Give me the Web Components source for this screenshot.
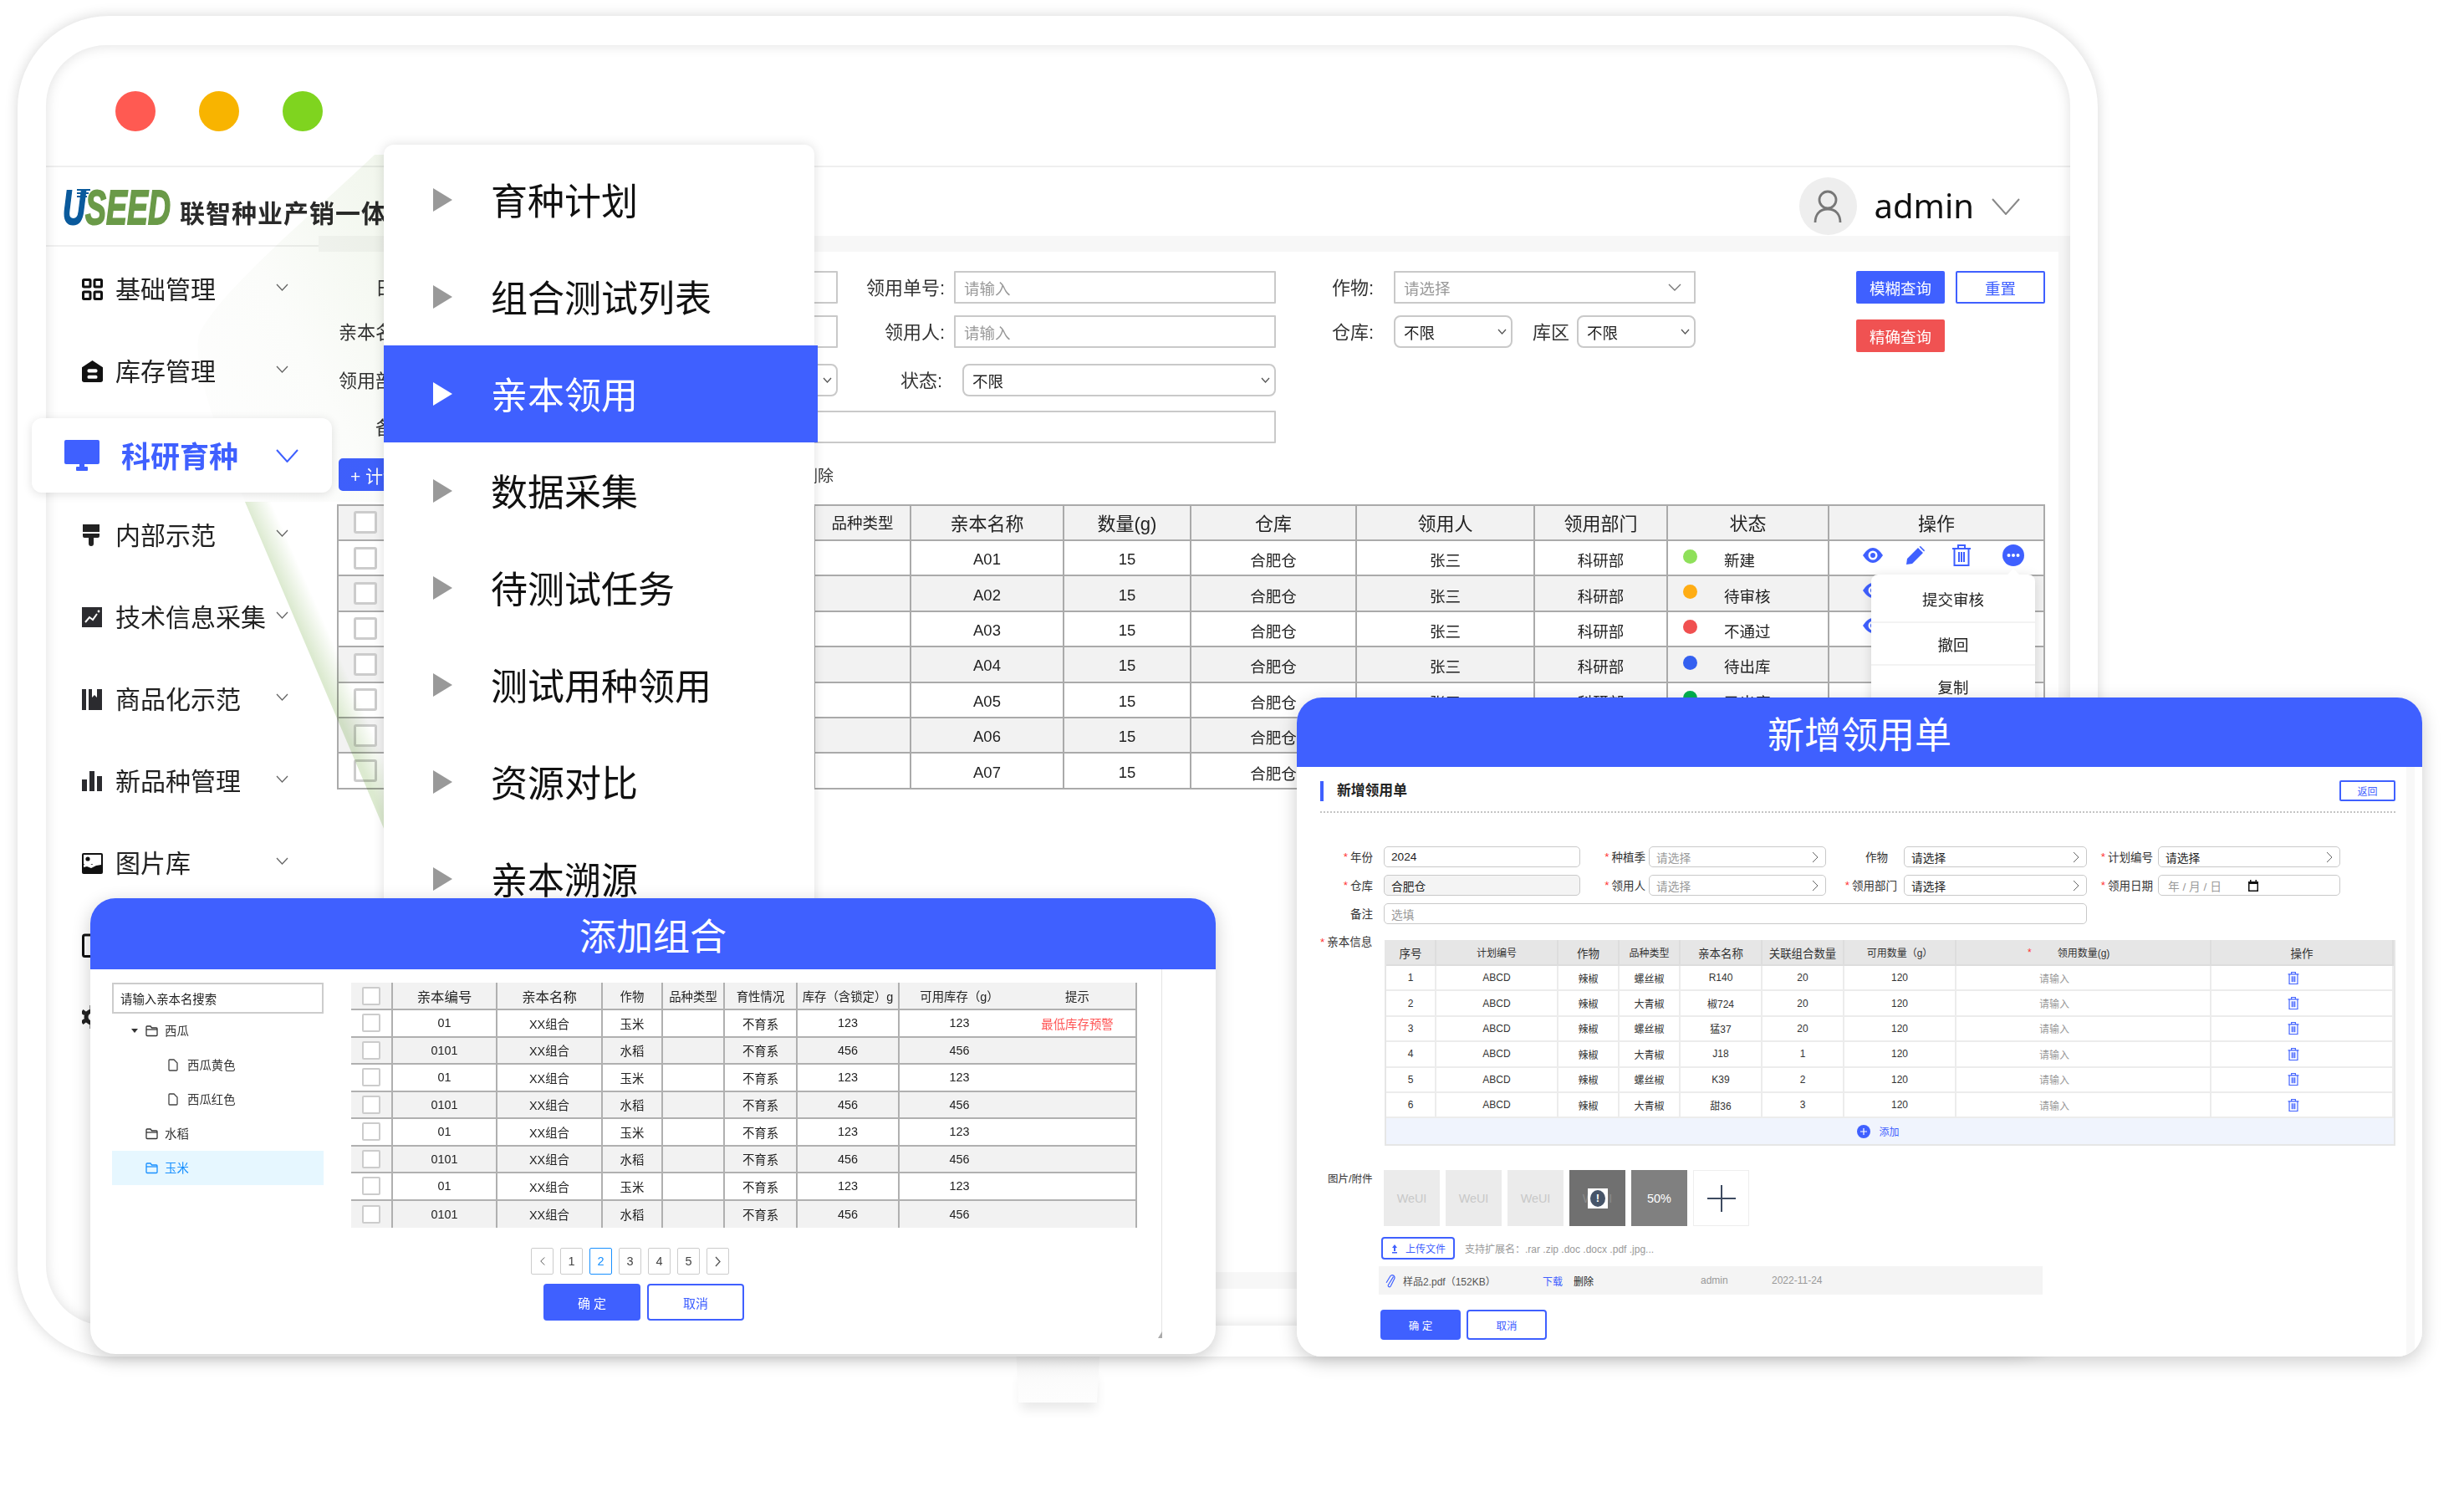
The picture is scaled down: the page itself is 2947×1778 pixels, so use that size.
<!DOCTYPE html>
<html lang="zh-CN">
<head>
<meta charset="utf-8">
<title>USEED</title>
<style>
  html, body { margin: 0; padding: 0; background: #fff; }
  body { font-family: "Liberation Sans", "Noto Sans CJK SC", sans-serif; color: #222; }
</style>
</head>
<body>

<stage-canvas>
  <device-monitor>
    <app-shell>
      <side-nav slot="nav">
        <nav-item icon="grid">基础管理</nav-item>
        <nav-item icon="store">库存管理</nav-item>
        <nav-item icon="screen" active>科研育种</nav-item>
        <nav-item icon="brush">内部示范</nav-item>
        <nav-item icon="chart">技术信息采集</nav-item>
        <nav-item icon="books">商品化示范</nav-item>
        <nav-item icon="bars">新品种管理</nav-item>
        <nav-item icon="image">图片库</nav-item>
        <nav-item icon="box"></nav-item>
        <nav-item icon="gear" class="last"></nav-item>
      </side-nav>
      <requisition-panel slot="main"></requisition-panel>
    </app-shell>
  </device-monitor>

  <leaf-swoosh></leaf-swoosh>

  <sub-menu>
    <menu-entry>育种计划</menu-entry>
    <menu-entry>组合测试列表</menu-entry>
    <menu-entry active>亲本领用</menu-entry>
    <menu-entry>数据采集</menu-entry>
    <menu-entry>待测试任务</menu-entry>
    <menu-entry>测试用种领用</menu-entry>
    <menu-entry>资源对比</menu-entry>
    <menu-entry>亲本溯源</menu-entry>
  </sub-menu>

  <modal-window heading="添加组合" style="left:108px;top:1074px;width:1346px;height:545px;--head:85px">
    <combo-picker></combo-picker>
  </modal-window>

  <modal-window heading="新增领用单" style="left:1551px;top:834px;width:1346px;height:788px;--head:83px">
    <apply-form></apply-form>
  </modal-window>
</stage-canvas>

<script>
const BLUE = "#3f60ff";

// icons used all over the page
const ICONS = {
  grid: `<svg viewBox="0 0 25 26" width="25" height="26" fill="none" stroke="#111" stroke-width="3"><rect x="1.5" y="1.5" width="8.5" height="8.5" rx="1"/><rect x="15" y="1.5" width="8.5" height="8.5" rx="1"/><rect x="1.5" y="16" width="8.5" height="8.5" rx="1"/><rect x="15" y="16" width="8.5" height="8.5" rx="1"/></svg>`,
  store: `<svg viewBox="0 0 27 28" width="27" height="28"><path fill="#111" d="M13.5 0 27 9v16a3 3 0 0 1-3 3H3a3 3 0 0 1-3-3V9z"/><rect x="7" y="11" width="13" height="4.5" rx="2" fill="#fff"/><rect x="7" y="19" width="13" height="4.5" rx="2" fill="#fff"/></svg>`,
  screen: `<svg viewBox="0 0 42 37" width="42" height="37"><rect width="42" height="29" rx="2" fill="${BLUE}"/><rect x="18" y="29" width="6" height="4" fill="${BLUE}"/><rect x="14" y="32" width="14" height="5" rx="1" fill="${BLUE}"/></svg>`,
  brush: `<svg viewBox="0 0 22 26" width="22" height="26"><path fill="#222" d="M1 0h20v9H1z"/><path fill="#222" d="M1 11h20v3a2 2 0 0 1-2 2h-5v7a3 3 0 0 1-6 0v-7H3a2 2 0 0 1-2-2z"/></svg>`,
  chart: `<svg viewBox="0 0 24 24" width="24" height="24"><rect width="24" height="24" fill="#2b2b2f"/><path d="M4 18l5-6 4 3 5-7" fill="none" stroke="#fff" stroke-width="2"/><circle cx="20" cy="5" r="1.4" fill="#fff"/></svg>`,
  books: `<svg viewBox="0 0 24 25" width="24" height="25"><rect width="5" height="25" fill="#2b2b2f"/><path fill="#2b2b2f" d="M8 0h4v10l3-3 3 3V0h6v25H8z"/></svg>`,
  bars: `<svg viewBox="0 0 24 24" width="24" height="24" fill="#2b2b2f"><rect y="10" width="6" height="14"/><rect x="9" width="6" height="24"/><rect x="18" y="6" width="6" height="18"/></svg>`,
  image: `<svg viewBox="0 0 25 25" width="25" height="25"><rect width="25" height="25" rx="2" fill="#111"/><rect x="2" y="2" width="21" height="11" fill="#fff"/><circle cx="7" cy="7" r="2.6" fill="#111"/><path fill="#fff" d="M2 14l5-3 5 3 6-5 5 3v2l-6 1-6 3-5-2-4 1z"/></svg>`,
  box: `<svg viewBox="0 0 24 30" width="24" height="30" fill="none" stroke="#111" stroke-width="3"><rect x="1.5" y="3" width="21" height="25.5" rx="2"/></svg>`,
  gear: `<svg viewBox="0 0 24 28" width="24" height="28" fill="none" stroke="#222" stroke-width="5"><circle cx="12" cy="14" r="7"/><path d="M12 0v5M12 23v5M0 7l4 3M0 21l4-3M24 7l-4 3M24 21l-4-3"/></svg>`,
  eye: `<svg viewBox="0 0 24 18" width="24" height="18"><path fill="${BLUE}" d="M0 9C4 3 8 0 12 0s8 3 12 9c-4 6-8 9-12 9S4 15 0 9z"/><circle cx="12" cy="9" r="5.5" fill="#fff"/><circle cx="12" cy="9" r="3" fill="${BLUE}"/></svg>`,
  pencil: `<svg viewBox="0 0 22 22" width="22" height="22"><path fill="${BLUE}" d="M0 22l1-7L14 2l6 6L7 21zM15.500 .8 17 0l5 5-.8 1.600z"/></svg>`,
  trash: `<svg viewBox="0 0 24 26" width="24" height="26" fill="none" stroke="${BLUE}" stroke-width="2"><path d="M1 5h22M8 5V1h8v4M3.500 5v20h17V5M9 9v12M12 9v12M15 9v12"/></svg>`,
  more: `<svg viewBox="0 0 26 26" width="26" height="26"><circle cx="13" cy="13" r="13" fill="${BLUE}"/><circle cx="7.500" cy="13" r="2" fill="#fff"/><circle cx="13" cy="13" r="2" fill="#fff"/><circle cx="18.500" cy="13" r="2" fill="#fff"/></svg>`,
  user: `<svg viewBox="0 0 34 40" width="34" height="40" fill="none" stroke="#777" stroke-width="2.800"><circle cx="17" cy="12" r="10"/><path d="M2 39c0-9 5-16 15-16s15 7 15 16"/></svg>`,
  folder: `<svg viewBox="0 0 15 15" width="15" height="15" fill="none" stroke="currentColor" stroke-width="1.300"><path d="M1 3a1 1 0 0 1 1-1h4l1.500 2H13a1 1 0 0 1 1 1v7.500a1 1 0 0 1-1 1H2a1 1 0 0 1-1-1z"/><path d="M1 6h13"/></svg>`,
  file: `<svg viewBox="0 0 12 15" width="12" height="15" fill="none" stroke="#444" stroke-width="1.300"><path d="M1 2a1 1 0 0 1 1-1h5l4 4v8a1 1 0 0 1-1 1H2a1 1 0 0 1-1-1z"/></svg>`,
  clip: `<svg viewBox="0 0 15 25" width="15" height="25" fill="none" stroke="${BLUE}" stroke-width="1.500"><path d="M12.500 7 5 19c-1.500 2.500 2 4.500 3.500 2L14 10c1.500-3-2.500-8-6-4L2 16"/></svg>`,
  upload: `<svg viewBox="0 0 10 12" width="10" height="12" fill="${BLUE}"><path d="M5 1 8 5H6v4H4V5H2zM2 10h6v1.500H2z"/></svg>`,
  plus: `<svg viewBox="0 0 16 16" width="16" height="16"><circle cx="8" cy="8" r="8" fill="${BLUE}"/><path d="M4 8h8M8 4v8" stroke="#fff" stroke-width="1.200"/></svg>`,
  calendar: `<svg viewBox="0 0 12 14" width="12" height="14"><path fill="#111" d="M2 0h1.500v2h5V0H10v2h2v12H0V2h2zM1.500 5v7.500h9V5z"/></svg>`
};

const chevronDown = (w, h, color, sw) => `<svg viewBox="0 0 ${w} ${h}" width="${w}" height="${h}" fill="none" stroke="${color}" stroke-width="${sw}"><path d="M1 1l${w / 2 - 1} ${h - 2}L${w - 1} 1"/></svg>`;
const chevronRight = (w, h, color, sw) => `<svg viewBox="0 0 ${w} ${h}" width="${w}" height="${h}" fill="none" stroke="${color}" stroke-width="${sw}"><path d="M1 1l${w - 2} ${h / 2 - 1}L1 ${h - 1}"/></svg>`;

// every element stamps its own template into an open shadow root
class Base extends HTMLElement {
  constructor() {
    super();
    this.attachShadow({ mode: "open" });
  }
  connectedCallback() {
    if (this.rendered) return;
    this.rendered = true;
    const template = document.createElement("template");
    template.innerHTML = this.markup();
    this.shadowRoot.appendChild(template.content.cloneNode(true));
  }
}

class StageCanvas extends Base {
  markup() {
    return `<style>:host{display:block;position:relative;width:2947px;height:1778px;overflow:hidden;background:#fff}</style><slot></slot>`;
  }
}

class DeviceMonitor extends Base {
  markup() {
    return `<style>
      :host{display:block;position:absolute;left:21px;top:19px;width:2488px;height:1603px}
      .stand{position:absolute;left:1194px;top:1590px;width:101px;height:68px;
        clip-path:polygon(0 0,100% 0,96% 100%,3% 100%);background:linear-gradient(#f8f8f8,#fdfdfd)}
      .standshadow{position:absolute;left:1200px;top:1620px;width:90px;height:38px;box-shadow:0 8px 14px rgba(0,0,0,.09)}
      .frame{position:relative;box-sizing:border-box;width:100%;height:100%;padding:35px 33px 37px 34px;
        background:#fff;border-radius:110px;box-shadow:0 0 16px rgba(0,0,0,.16)}
    </style>
    <div class="standshadow"></div>
    <div class="stand"></div>
    <div class="frame"><slot></slot></div>`;
  }
}

class AppShell extends Base {
  markup() {
    return `<style>
      :host{display:flex;flex-direction:column;position:relative;height:100%;border-radius:72px;background:#fff}
      :host::after{content:"";position:absolute;inset:0;border-radius:72px;box-shadow:inset 0 0 16px rgba(0,0,0,.13);pointer-events:none}
      .titlebar{flex:none;box-sizing:border-box;height:146px;padding:55px 0 0 83px;display:flex;gap:52px;border-bottom:2px solid #efefef}
      .dot{width:48px;height:48px;border-radius:50%}
      .header{flex:none;height:82px;display:flex;align-items:flex-start;padding-left:20px;padding-right:60px}
      .logo{position:relative;width:140px;height:42px;flex:none;margin-top:26px}
      .word{position:absolute;left:0;top:-12px;font:italic 700 58px "Liberation Sans",sans-serif;color:#6a9a48;transform:scaleX(.645);transform-origin:left top;white-space:nowrap;-webkit-text-stroke:2px currentColor}
      .word b{color:#0a5a9c}
      .stripes{position:absolute;left:17px;top:0}
      .sub{font-size:30px;font-weight:700;color:#2a2a2a;letter-spacing:1px;white-space:nowrap;margin-top:31px}
      .user{margin-left:auto;display:flex;align-items:center;margin-top:12px}
      .avatar{width:69px;height:69px;border-radius:50%;background:#eee;display:flex;align-items:center;justify-content:center}
      .name{font:40px "Noto Sans",sans-serif;color:#111;margin-left:21px;margin-right:21px;margin-top:-2px}
      .body{flex:1;min-height:0;display:grid;grid-template-columns:326px 1fr}
    </style>
    <div class="titlebar">
      <div class="dot" style="background:#ff5a52"></div>
      <div class="dot" style="background:#f8b400"></div>
      <div class="dot" style="background:#7fd41f"></div>
    </div>
    <div class="header">
      <div class="logo">
        <div class="word"><b>U</b>SEED</div>
        <svg class="stripes" viewBox="0 0 16 12" width="16" height="12"><path d="M0 1h16M0 5h14M0 9h12" stroke="#0a5a9c" stroke-width="2.200"/></svg>
      </div>
      <div class="sub">联智种业产销一体化</div>
      <div class="user">
        <div class="avatar">${ICONS.user}</div>
        <div class="name">admin</div>
        ${chevronDown(34, 20, "#888", 2)}
      </div>
    </div>
    <div class="body"><slot name="nav"></slot><slot name="main"></slot></div>`;
  }
}

class SideNav extends Base {
  markup() {
    return `<style>
      :host{display:flex;flex-direction:column;overflow:visible}
      .rule{height:2px;margin-top:11px;background:#f0f0f0;flex:none}
      .list{display:grid;grid-auto-rows:98px;margin-top:2px}
    </style><div class="rule"></div><div class="list"><slot></slot></div>`;
  }
}

class NavItem extends Base {
  markup() {
    const icon = this.getAttribute("icon");
    const active = this.hasAttribute("active");
    const arrow = !this.textContent.trim() ? "" : active ? chevronDown(27, 16, BLUE, 2) : chevronDown(15, 9, "#666", 1.3);
    return `<style>
      :host{display:flex;align-items:center;box-sizing:border-box;padding:0 36px 0 43px;font-size:30px;color:#222;position:relative}
      :host([active]){z-index:2;height:89px;margin:7px -16px 0 -17px;padding:0 40px 0 39px;background:#fff;border-radius:12px;
        box-shadow:0 2px 12px rgba(0,0,0,.12);color:${BLUE};font-size:35px;font-weight:700}
      :host(.last){margin-top:-24px}
      .ic{flex:none;width:25px;display:flex;justify-content:flex-start}
      :host([active]) .ic{width:42px}
      .tx{margin-left:15px;white-space:nowrap;margin-top:-4px}
      :host([active]) .tx{margin-left:26px;margin-top:-2px}
      .ch{margin-left:auto;display:flex;margin-top:-6px}
      :host([active]) .ch{margin-top:0}
    </style><span class="ic">${ICONS[icon]}</span><span class="tx"><slot></slot></span><span class="ch">${arrow}</span>`;
  }
}

class FormField extends Base {
  markup() {
    const kind = this.getAttribute("kind") || "input";
    let arrow = "";
    if (kind === "select") arrow = chevronDown(11, 7, "#555", 1.3);
    if (kind === "combo") arrow = chevronDown(16, 9, "#777", 1.4);
    if (kind === "pick") arrow = chevronRight(8, 14, "#666", 1);
    return `<style>
      :host{display:flex;align-items:center;box-sizing:border-box;height:var(--field-h,39px);border:var(--field-line,2px) solid #c9c9c9;
        padding:0 var(--field-pad-r,11px) 0 var(--field-pad,10px);background:#fff;font-size:var(--field-font,18.5px);color:#222;border-radius:var(--field-r,1px);min-width:0}
      :host([kind=select]){border-radius:var(--field-sel-r,8px);padding-right:5px}
      :host([kind=combo]){padding-right:15px}
      :host([hint]){color:#999}
      :host([disabled]){background:#f4f4f4}
      .tx{white-space:nowrap;flex:1}
      .ar{display:flex}
    </style><span class="tx"><slot></slot></span><span class="ar">${arrow}</span>`;
  }
}

class XButton extends Base {
  markup() {
    return `<style>
      :host{display:flex;align-items:center;justify-content:center;box-sizing:border-box;background:${BLUE};color:#fff;border:2px solid ${BLUE};border-radius:var(--btn-r,2px);white-space:nowrap;font-size:var(--btn-font,18.5px)}
      :host([variant=line]){background:#fff;color:${BLUE}}
      :host([variant=danger]){background:#f05252;border-color:#f05252}
    </style><slot></slot>`;
  }
}

class RequisitionTable extends Base {
  markup() {
    const heads = [["", 65], ["", 505], ["品种类型", 115, 18.5], ["亲本名称", 183], ["数量(g)", 152], ["仓库", 198], ["领用人", 213], ["领用部门", 159], ["状态", 193], ["操作", 258]];
    const states = [["新建", "#8fe05a"], ["待审核", "#ffad14"], ["不通过", "#f05050"], ["待出库", "#3460f0"], ["已出库", "#00b050"], ["已出库", "#00b050"], ["已出库", "#00b050"]];
    const check = `<span class="check"></span>`;
    let cells = heads.map((h, i) => `<div class="c h" ${h[2] ? `style="font-size:${h[2]}px"` : ""}>${i === 0 ? check : h[0]}</div>`).join("");
    states.forEach((s, i) => {
      const odd = i % 2 ? "alt" : "";
      let ops = "";
      if (i === 0) ops = `<span class="op" style="margin-left:40px">${ICONS.eye}</span><span class="op" style="margin-left:28px">${ICONS.pencil}</span><span class="op" style="margin-left:32px">${ICONS.trash}</span><span class="op" style="margin-left:37px">${ICONS.more}</span>`;
      if (i === 1 || i === 2) ops = `<span class="op" style="margin-left:40px">${ICONS.eye}</span>`;
      cells += `<div class="c ${odd}">${check}</div><div class="c ${odd}"></div><div class="c ${odd}"></div>
        <div class="c r ${odd}">A0${i + 1}</div><div class="c r ${odd}">15</div><div class="c r ${odd}">合肥仓</div><div class="c r ${odd}">张三</div><div class="c r ${odd}">科研部</div>
        <div class="c st r ${odd}"><i style="background:${s[1]}"></i><span>${s[0]}</span></div><div class="c ops ${odd}">${ops}</div>`;
    });
    return `<style>
      :host{display:block;position:relative}
      .t{display:grid;grid-template-columns:${heads.map(h => h[1] + "px").join(" ")};grid-template-rows:42px repeat(7,42.4px);border-top:2px solid #aaa;margin-top:-1px;border-left:2px solid #aaa;margin-left:-2px;font-size:18.5px;color:#222}
      .c{display:flex;align-items:center;justify-content:center;box-sizing:border-box;border-right:2px solid #aaa;border-bottom:2px solid #aaa;background:#fff;white-space:nowrap}
      .r{padding-top:4px}
      .h{background:#f2f2f2;font-size:22px;padding-bottom:2px}
      .alt{background:#f2f2f2}
      .check{width:28px;height:27px;box-sizing:border-box;border:3px solid #ccc;border-radius:3px;background:#fff}
      .st{justify-content:flex-start;padding-left:18px}
      .st i{width:17px;height:17px;border-radius:50%;margin-right:32px;margin-top:-8px;flex:none}
      .ops{justify-content:flex-start}
      .op{display:flex;margin-top:-7px}
      .pop{position:absolute;left:1833px;top:84px;width:196px;height:176px;background:#fff;border-radius:8px;box-shadow:0 2px 14px rgba(0,0,0,.13);font-size:18.5px;color:#222;text-align:center}
      .pop::before{content:"";position:absolute;left:163px;top:-7px;border:7px solid transparent;border-top:0;border-bottom-color:#fff}
      .pop div{height:58px;line-height:62px;border-bottom:2px solid #f3f3f3;box-sizing:border-box}
      .pop div+div{height:51px;line-height:54px}
    </style>
    <div class="t">${cells}</div>
    <div class="pop"><div>提交审核</div><div>撤回</div><div>复制</div></div>`;
  }
}

class RequisitionPanel extends Base {
  markup() {
    return `<style>
      :host{display:flex;flex-direction:column;height:100%;background:#f7f7f7;padding-top:19px;box-sizing:border-box;font-size:22px;color:#333}
      .card{flex:none;height:1220px;margin-right:14px;background:#fff;box-sizing:border-box;padding:23px 0 0 24px}
      .foot{flex:1;margin-top:20px;background:#fff}
      .form{display:grid;grid-template-columns:105px 492px 139px 385px 141px 142px 77px 142px 192px 106px 13px 107px;grid-template-rows:39px 14px 39px 19px 39px 17px 39px}
      .l{display:flex;align-items:center;justify-content:flex-end;padding-right:11px;white-space:nowrap;margin-top:-4px}
      .left{justify-content:flex-start;padding-left:67px;padding-right:0}
      .lz{justify-content:flex-start;padding-left:24px;padding-right:0}
      x-button{height:39px}
      .tools{display:flex;justify-content:space-between;align-items:center;width:592px;margin-top:18px;height:39px;font-size:19px}
      .tools x-button{width:130px;--btn-r:5px;--btn-font:21px}
      requisition-table{margin-top:17px;width:2041px}
    </style>
    <div class="card">
      <div class="form">
        <span class="l" style="grid-area:1/1">日期:</span><form-field style="grid-area:1/2"></form-field>
        <span class="l" style="grid-area:1/3">领用单号:</span><form-field hint style="grid-area:1/4">请输入</form-field>
        <span class="l left" style="grid-area:1/5">作物:</span><form-field hint kind="combo" style="grid-area:1/6/auto/span 3">请选择</form-field>
        <x-button style="grid-area:1/10">模糊查询</x-button><x-button variant="line" style="grid-area:1/12">重置</x-button>

        <span class="l" style="grid-area:3/1">亲本名称:</span><form-field style="grid-area:3/2"></form-field>
        <span class="l" style="grid-area:3/3">领用人:</span><form-field hint style="grid-area:3/4">请输入</form-field>
        <span class="l left" style="grid-area:3/5">仓库:</span><form-field kind="select" style="grid-area:3/6">不限</form-field>
        <span class="l lz" style="grid-area:3/7">库区</span><form-field kind="select" style="grid-area:3/8">不限</form-field>
        <x-button variant="danger" style="grid-area:3/10;margin-top:5px">精确查询</x-button>

        <span class="l" style="grid-area:5/1">领用部门:</span><form-field kind="select" style="grid-area:5/2"></form-field>
        <span class="l" style="grid-area:5/3;padding-right:14px">状态:</span><form-field kind="select" style="grid-area:5/4;margin-left:10px">不限</form-field>

        <span class="l" style="grid-area:7/1">备注:</span><form-field style="grid-area:7/2/auto/span 3"></form-field>
      </div>
      <div class="tools"><x-button>+ 计划领用</x-button><span>删除</span></div>
      <requisition-table></requisition-table>
    </div>
    <div class="foot"></div>`;
  }
}

class LeafSwoosh extends Base {
  markup() {
    return `<style>:host{display:block;position:absolute;left:0;top:0;width:470px;height:1000px;mix-blend-mode:multiply;pointer-events:none}svg{display:block}</style>
    <svg viewBox="0 0 470 1000" width="470" height="1000">
      <defs>
        <linearGradient id="g" gradientUnits="userSpaceOnUse" x1="345" y1="720" x2="372" y2="708"><stop offset="0" stop-color="#dcead0"/><stop offset="1" stop-color="#fff"/></linearGradient>
        <linearGradient id="a" x1="1" y1="0" x2="0" y2="1"><stop offset="0" stop-color="#f1f6ec"/><stop offset=".5" stop-color="#fbfcfa"/><stop offset="1" stop-color="#fefefe"/></linearGradient>
      </defs>
      <path fill="url(#a)" d="M448 185C380 250 260 350 238 400c-8 40 20 110 55 200L460 600V185z"/>
      <path fill="url(#g)" d="M293 600L460 993V600z"/>
    </svg>`;
  }
}

class SubMenu extends Base {
  markup() {
    return `<style>
      :host{display:block;position:absolute;left:459px;top:173px;width:515px;height:936px;box-sizing:border-box;padding-top:8px;background:#fff;border-radius:12px;box-shadow:0 0 14px rgba(0,0,0,.13)}
    </style><slot></slot>`;
  }
}

class MenuEntry extends Base {
  markup() {
    return `<style>
      :host{display:flex;align-items:center;height:116px;box-sizing:border-box;padding-left:59px;font-size:44px;color:#111}
      :host([active]){background:${BLUE};color:#fff;margin-right:-4px}
      .tri{width:0;height:0;border-left:23px solid #999;border-top:14px solid transparent;border-bottom:14px solid transparent;margin-right:46px;flex:none}
      :host([active]) .tri{border-left-color:#fff}
      span+span{margin-top:-3px}
    </style><span class="tri"></span><span><slot></slot></span>`;
  }
}

class ModalWindow extends Base {
  markup() {
    return `<style>
      :host{display:block;position:absolute;background:#fff;border-radius:30px;box-shadow:0 6px 22px rgba(0,0,0,.2);overflow:hidden}
      .head{height:var(--head);display:flex;align-items:center;justify-content:center;background:${BLUE};color:#fff;font-size:44px}
      .body{height:calc(100% - var(--head))}
    </style><div class="head">${this.getAttribute("heading")}</div><div class="body"><slot></slot></div>`;
  }
}

class ComboTree extends Base {
  markup() {
    const row = (icon, text, cls) => `<div class="row ${cls}">${icon}<span>${text}</span></div>`;
    return `<style>
      :host{display:block;width:253px;font-size:14.4px;color:#333}
      .search{box-sizing:border-box;height:37px;border:2px solid #ccc;padding-left:8px;display:flex;align-items:center;color:#222;margin-bottom:0}
      .row{height:41px;display:flex;align-items:center;gap:8px;padding-left:40px;white-space:nowrap}
      .row span{margin-top:-2px}
      .row svg{flex:none}
      .row.leaf{padding-left:67px;gap:11px}
      .caret{position:absolute;margin-left:-17px;border:4px solid transparent;border-top:5px solid #333;border-bottom:0}
      .on{background:#e6f7ff;color:#1890ff}
    </style>
    <div class="search">请输入亲本名搜索</div>
    <div class="row"><i class="caret"></i>${ICONS.folder}<span>西瓜</span></div>
    ${row(ICONS.file, "西瓜黄色", "leaf")}
    ${row(ICONS.file, "西瓜红色", "leaf")}
    ${row(ICONS.folder, "水稻", "")}
    ${row(ICONS.folder, "玉米", "on")}`;
  }
}

class ComboTable extends Base {
  markup() {
    const heads = [["", 50], ["亲本编号", 125, 16.4], ["亲本名称", 126, 16.4], ["作物", 72], ["品种类型", 74], ["育性情况", 87], ["库存（含锁定）g", 122], ["可用库存（g）", 143], ["提示", 141]];
    const check = `<span class="check"></span>`;
    let cells = heads.map((h, i) => `<div class="c h" ${h[2] ? `style="font-size:${h[2]}px"` : ""}>${i === 0 ? check : h[0]}</div>`).join("");
    for (let i = 0; i < 8; i++) {
      const odd = i % 2 === 1;
      const alt = odd ? "alt" : "";
      const stock = odd ? "456" : "123";
      cells += `<div class="c ${alt}">${check}</div><div class="c ${alt}">${odd ? "0101" : "01"}</div><div class="c ${alt}">XX组合</div><div class="c ${alt}">${odd ? "水稻" : "玉米"}</div><div class="c ${alt}"></div>
        <div class="c ${alt}">不育系</div><div class="c ${alt}">${stock}</div><div class="c ${alt}">${stock}</div><div class="c end ${alt} warn">${i === 0 ? "最低库存预警" : ""}</div>`;
    }
    return `<style>
      :host{display:grid;grid-template-columns:${heads.map(h => h[1] + "px").join(" ")};grid-template-rows:33px repeat(8,32.5px);width:940px;font-size:14.4px;color:#222}
      .c{display:flex;align-items:center;justify-content:center;box-sizing:border-box;border-right:2px solid #b0b0b0;border-bottom:2px solid #b0b0b0;background:#fff;white-space:nowrap}
      .h,.alt{background:#f2f2f2}
      .c:nth-child(9n){border-right:0}
      .c:nth-last-child(-n+9){border-bottom:0}
      .warn{color:#f55}
      .check{width:22px;height:22px;box-sizing:border-box;border:2px solid #ccc;border-radius:2px;background:#fff}
    </style>${cells}`;
  }
}

class PageBar extends Base {
  markup() {
    const box = (content, on) => `<span class="p ${on ? "on" : ""}">${content}</span>`;
    const prev = `<svg viewBox="0 0 8 14" width="6" height="12" fill="none" stroke="#555" stroke-width="1.300"><path d="M7 1 1 7l6 6"/></svg>`;
    return `<style>
      :host{display:flex;gap:8px;font-size:14.5px;color:#444}
      .p{width:27px;height:32px;box-sizing:border-box;border:1.500px solid #ccc;border-radius:2px;display:flex;align-items:center;justify-content:center;background:#fff}
      .on{border-color:#1890ff;color:#1890ff}
    </style>${box(prev)}${box(1)}${box(2, true)}${box(3)}${box(4)}${box(5)}${box(chevronRight(7, 13, "#555", 1.3))}`;
  }
}

class ComboPicker extends Base {
  markup() {
    return `<style>
      :host{display:block;height:441px;width:1282px;box-sizing:border-box;border-right:1px solid #e4e4e4;position:relative;padding:16px 0 0 26px}
      :host::after{content:"";position:absolute;right:-1px;bottom:0;border-left:5px solid transparent;border-bottom:8px solid #aaa}
      .cols{display:flex;gap:33px}
      page-bar{margin:24px 0 0 215px}
      .btns{display:flex;gap:8px;margin:11px 0 0 230px;--btn-r:4px;--btn-font:15px}
      x-button{width:116px;height:44px}
    </style>
    <div class="cols">
      <combo-tree></combo-tree>
      <div>
        <combo-table></combo-table>
        <page-bar></page-bar>
        <div class="btns"><x-button>确 定</x-button><x-button variant="line">取消</x-button></div>
      </div>
    </div>`;
  }
}

class ApplyTable extends Base {
  markup() {
    const heads = [["序号", 62, 13.5], ["计划编号", 146, 12], ["作物", 73, 13.5], ["品种类型", 73, 12], ["亲本名称", 98, 13.5], ["关联组合数量", 98, 13.4], ["可用数量（g）", 134, 12], [`<em>*</em>领用数量(g)`, 305, 12], ["操作", 220, 13.5]];
    const rows = [["R140", 20, "螺丝椒"], ["椒724", 20, "大青椒"], ["猛37", 20, "螺丝椒"], ["J18", 1, "大青椒"], ["K39", 2, "螺丝椒"], ["甜36", 3, "大青椒"]];
    let cells = heads.map((h, i) => `<div class="c h ${i === 7 ? "star" : ""}" style="font-size:${h[2]}px">${h[0]}</div>`).join("");
    rows.forEach((r, i) => {
      cells += `<div class="c">${i + 1}</div><div class="c">ABCD</div><div class="c">辣椒</div><div class="c">${r[2]}</div><div class="c">${r[0]}</div><div class="c">${r[1]}</div><div class="c">120</div><div class="c gray">请输入</div><div class="c bin">${ICONS.trash.replace('width="24" height="26"', 'width="14" height="17"')}</div>`;
    });
    return `<style>
      :host{display:block;width:1209px;font-size:12px;color:#333;border-left:2px solid #e6e6e6;border-right:2px solid #e6e6e6;box-sizing:border-box}
      .t{display:grid;grid-template-columns:60px 146px 73px 73px 98px 98px 134px 305px 218px;grid-template-rows:31px repeat(6,30.4px)}
      .c{display:flex;align-items:center;justify-content:center;box-sizing:border-box;border-right:2px solid #ececec;border-bottom:2px solid #ececec;white-space:nowrap}
      .h{background:#e6e6e6;border-color:#ddd}
      .gray{color:#999;justify-content:flex-start;padding-left:99px}
      .bin{padding-right:20px}
      .star{justify-content:flex-start;padding-left:85px}
      .h em{color:#f33;font-style:normal;margin-right:31px}
      .add{height:33px;background:#f0f4fd;border-bottom:2px solid #e6e6e6;display:flex;align-items:center;justify-content:center;gap:10px;color:${BLUE};box-sizing:border-box;padding-right:28px}
      .add svg{flex:none}
    </style>
    <div class="t">${cells}</div>
    <div class="add">${ICONS.plus}<span>添加</span></div>`;
  }
}

class ApplyForm extends Base {
  markup() {
    const label = (text, star, area, pad) => `<span class="l" style="grid-area:${area};padding-right:${pad}px">${star ? "<em>*</em>" : ""}${text}</span>`;
    const weui = `<span class="th">WeUI</span>`;
    return `<style>
      :host{display:block;height:100%;box-sizing:border-box;padding:16px 32px 0 28px;background:linear-gradient(to right,#fff 1327px,#f8f8f8 1327px,#f8f8f8 1337px,#fff 1337px);
        --field-h:25px;--field-line:1.500px;--field-font:13.7px;--field-r:5px;--field-pad:8px;--field-pad-r:8px;font-size:13.5px;color:#333}
      .top{display:flex;align-items:center;justify-content:space-between;height:25px;padding-bottom:12px;border-bottom:2px dotted #c4c4c4}
      .title{border-left:4px solid ${BLUE};padding-left:16px;font-size:16.800px;font-weight:700;color:#222;height:24px;line-height:24px}
      .back{width:67px;height:25px;--btn-font:12px}
      .form{display:grid;grid-template-columns:76px 235px 82px 212px 93px 219px 85px 218px;grid-template-rows:25px 25px 25px;row-gap:9px;margin-top:40px}
      .l{display:flex;align-items:center;justify-content:flex-end;white-space:nowrap;margin-top:-1px}
      .l em,.side em{color:#f33;font-style:normal;margin-right:3px}
      apply-table{margin:19px 0 0 77px}
      .side{position:relative;height:0}
      .side span{position:absolute;left:0;top:2px;white-space:nowrap}
      .att{display:grid;grid-template-columns:76px 1fr;margin-top:29px}
      .att .lab{font-size:12.500px;padding-left:9px;white-space:nowrap}
      .thumbs{display:flex;gap:7px}
      .th{box-sizing:border-box;width:67px;height:67px;background:#ebebeb;color:#c8c8c8;font-size:14.4px;display:flex;align-items:center;justify-content:center;position:relative}
      .dark{background:#707070;color:#8a8a8a}
      .warnbox{position:absolute;left:22px;top:22px;width:24px;height:24px;background:#fff;display:flex;align-items:center;justify-content:center}
      .warnbox i{width:18px;height:20px;border-radius:50%;background:#475569;color:#fff;font:700 13px "Liberation Sans",sans-serif;text-align:center;line-height:20px}
      .gray{background:#808080;color:#fff}
      .add{background:#fff;border:1.500px solid #eee}
      .add svg{display:block}
      .up{display:flex;align-items:center;margin:13px 0 0 73px;gap:12px;font-size:12px;color:#999}
      .up x-button{width:88px;height:27px;--btn-font:12px;--btn-r:4px;gap:8px;color:${BLUE}}
      .filerow{display:grid;grid-template-columns:29px 167px 37px 152px 85px 1fr;align-items:center;width:794px;height:34px;margin:8px 0 0 70px;background:#f4f4f4;font-size:12px;color:#555;white-space:nowrap}
      .filerow svg{margin-left:7px;display:block}
      .act{display:flex;gap:7px;margin:18px 0 0 72px;--btn-font:12.500px;--btn-r:4px}
      .act x-button{width:96px;height:36px}
    </style>
    <div class="top"><div class="title">新增领用单</div><x-button variant="line" class="back">返回</x-button></div>
    <div class="form">
      ${label("年份", 1, "1/1", 13)}<form-field style="grid-area:1/2">2024</form-field>
      ${label("种植季", 1, "1/3", 4)}<form-field kind="pick" hint style="grid-area:1/4">请选择</form-field>
      ${label("作物", 0, "1/5", 19)}<form-field kind="pick" style="grid-area:1/6">请选择</form-field>
      ${label("计划编号", 1, "1/7", 6)}<form-field kind="pick" style="grid-area:1/8">请选择</form-field>

      ${label("仓库", 1, "2/1", 13)}<form-field disabled style="grid-area:2/2">合肥仓</form-field>
      ${label("领用人", 1, "2/3", 4)}<form-field kind="pick" hint style="grid-area:2/4">请选择</form-field>
      ${label("领用部门", 1, "2/5", 8)}<form-field kind="pick" style="grid-area:2/6">请选择</form-field>
      ${label("领用日期", 1, "2/7", 6)}<form-field hint style="grid-area:2/8;--field-pad:11px"><span style="display:flex;align-items:center;gap:32px">年 / 月 / 日 ${ICONS.calendar}</span></form-field>

      ${label("备注", 0, "3/1", 13)}<form-field hint style="grid-area:3/2/auto/span 5">选填</form-field>
    </div>
    <div class="side"><span style="top:10px"><em>*</em>亲本信息</span></div>
    <apply-table></apply-table>
    <div class="att">
      <div class="lab">图片/附件</div>
      <div class="thumbs">
        ${weui}${weui}${weui}
        <span class="th dark">WeUI<span class="warnbox"><i>!</i></span></span>
        <span class="th gray">50%</span>
        <span class="th add"><svg viewBox="0 0 34 32" width="34" height="32"><path d="M0 16h34M17 0v32" stroke="#3d4a60" stroke-width="2"/></svg></span>
      </div>
    </div>
    <div class="up"><x-button variant="line">${ICONS.upload}上传文件</x-button><span>支持扩展名：.rar .zip .doc .docx .pdf .jpg...</span></div>
    <div class="filerow">${ICONS.clip.replace('width="15" height="25"', 'width="13" height="20"')}<span>样品2.pdf（152KB）</span><span style="color:${BLUE}">下载</span><span style="color:#222">删除</span><span style="color:#999">admin</span><span style="color:#999">2022-11-24</span></div>
    <div class="act"><x-button>确 定</x-button><x-button variant="line">取消</x-button></div>`;
  }
}

// 4. register everything (markup above is already parsed, so attributes are there)
const tags = {
  "stage-canvas": StageCanvas, "device-monitor": DeviceMonitor, "app-shell": AppShell, "side-nav": SideNav, "nav-item": NavItem,
  "form-field": FormField, "x-button": XButton, "requisition-table": RequisitionTable, "requisition-panel": RequisitionPanel,
  "leaf-swoosh": LeafSwoosh, "sub-menu": SubMenu, "menu-entry": MenuEntry, "modal-window": ModalWindow,
  "combo-tree": ComboTree, "combo-table": ComboTable, "page-bar": PageBar, "combo-picker": ComboPicker,
  "apply-table": ApplyTable, "apply-form": ApplyForm
};
Object.keys(tags).forEach(name => window.customElements.define(name, tags[name]));
</script>
</body>
</html>
